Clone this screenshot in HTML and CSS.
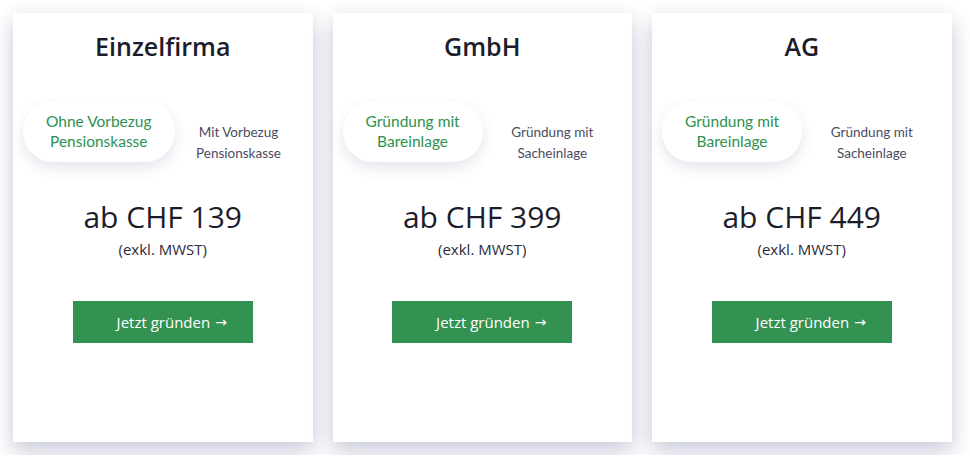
FILE: index.html
```html
<!DOCTYPE html>
<html lang="de">
<head>
<meta charset="utf-8">
<title>Preise</title>
<link rel="stylesheet" href="styles.css">
</head>
<body>
<div class="cards">
  <div class="card">
    <h2 class="title">Einzelfirma</h2>
    <div class="toggle">
      <div class="opt active">Ohne Vorbezug<br>Pensionskasse</div>
      <div class="opt">Mit Vorbezug<br>Pensionskasse</div>
    </div>
    <div class="price">ab CHF 139</div>
    <div class="note">(exkl. MWST)</div>
    <a class="btn" href="#">Jetzt gründen <span class="arrow">→</span></a>
  </div>
  <div class="card">
    <h2 class="title">GmbH</h2>
    <div class="toggle">
      <div class="opt active">Gründung mit<br>Bareinlage</div>
      <div class="opt">Gründung mit<br>Sacheinlage</div>
    </div>
    <div class="price">ab CHF 399</div>
    <div class="note">(exkl. MWST)</div>
    <a class="btn" href="#">Jetzt gründen <span class="arrow">→</span></a>
  </div>
  <div class="card">
    <h2 class="title">AG</h2>
    <div class="toggle">
      <div class="opt active">Gründung mit<br>Bareinlage</div>
      <div class="opt">Gründung mit<br>Sacheinlage</div>
    </div>
    <div class="price">ab CHF 449</div>
    <div class="note">(exkl. MWST)</div>
    <a class="btn" href="#">Jetzt gründen <span class="arrow">→</span></a>
  </div>
</div>
</body>
</html>
```

FILE: styles.css
```css
html, body {
  margin: 0;
  background: #ffffff;
}
body {
  padding: 13px;
  font-family: "Open Sans", "Liberation Sans", sans-serif;
}
.cards {
  display: flex;
  gap: 20px;
}
.card {
  width: 299.5px;
  height: 429px;
  box-sizing: border-box;
  background: #fff;
  padding: 16px 10px 0;
  display: flex;
  flex-direction: column;
  align-items: center;
  box-shadow: 0 12px 22px rgba(70, 80, 130, 0.24), 0 0 14px rgba(70, 80, 130, 0.08);
}
.title {
  margin: 0;
  font-size: 25px;
  line-height: 34px;
  font-weight: 600;
  color: #1c1d2b;
}
.toggle {
  margin-top: 38px;
  display: flex;
  align-items: flex-start;
  align-self: stretch;
}
.opt {
  font-family: "Lato", "Noto Sans", sans-serif;
  text-align: center;
}
.opt.active {
  flex: none;
  padding: 10px 23px 11px;
  border-radius: 30px;
  background: #fff;
  color: #2e9150;
  font-size: 15.5px;
  line-height: 20px;
  box-shadow: 0 6px 14px rgba(70, 80, 130, 0.14);
}
.opt:not(.active) {
  flex: 1;
  padding-top: 21px;
  color: #4a4c63;
  font-size: 13.5px;
  line-height: 21px;
}
.price {
  margin-top: 33px;
  font-size: 30px;
  line-height: 40px;
  color: #1c1d2b;
}
.note {
  margin-top: 2px;
  font-size: 15px;
  line-height: 20px;
  color: #2a2b3a;
}
.btn {
  margin-top: 42px;
  width: 180px;
  height: 42px;
  box-sizing: border-box;
  padding-left: 18px;
  display: flex;
  align-items: center;
  justify-content: center;
  background: #339152;
  color: #fff;
  font-size: 15px;
  text-decoration: none;
}
.arrow {
  font-family: "DejaVu Sans", sans-serif;
  font-size: 14px;
  margin-left: 5px;
}
```
